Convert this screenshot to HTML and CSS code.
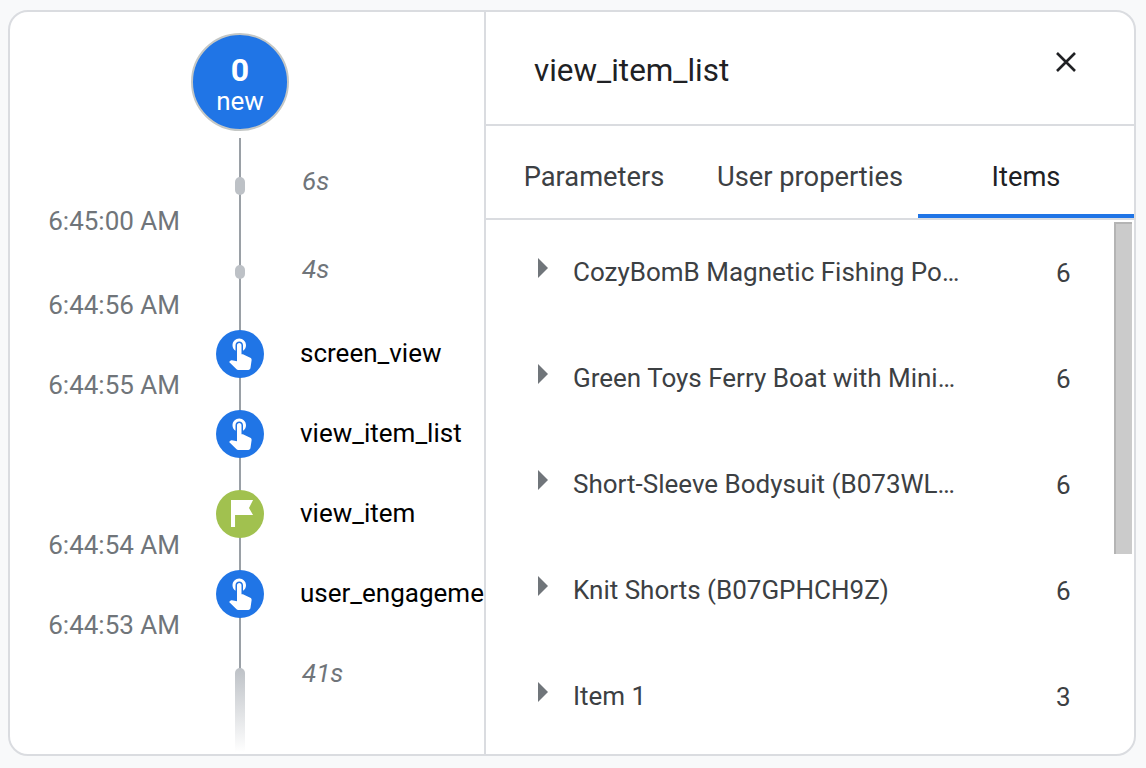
FILE: index.html
```html
<!DOCTYPE html>
<html lang="en">
<head>
<meta charset="utf-8">
<title>view_item_list</title>
<link rel="stylesheet" href="styles.css">
</head>
<body>
<svg class="defs" width="0" height="0" aria-hidden="true">
  <symbol id="touch" viewBox="0 0 24 24"><path d="M9 11.24V7.5C9 6.12 10.12 5 11.5 5S14 6.12 14 7.5v3.74c1.21-.81 2-2.18 2-3.74C16 5.01 13.99 3 11.5 3S7 5.01 7 7.5c0 1.56.79 2.93 2 3.74zm9.84 4.63l-4.54-2.26c-.17-.07-.35-.11-.54-.11H13v-6c0-.83-.67-1.5-1.5-1.5S10 6.67 10 7.5v10.74l-3.43-.72c-.08-.01-.15-.03-.24-.03-.31 0-.59.13-.79.33l-.79.8 4.94 4.94c.27.27.65.44 1.06.44h6.79c.75 0 1.33-.55 1.44-1.28l.75-5.27c.01-.07.02-.14.02-.2 0-.62-.38-1.16-.91-1.38z"/></symbol>
  <symbol id="flag" viewBox="0 0 24 24"><path d="M6 2.67H20.7L18 8l2.7 4.67H8.7v8H6z"/></symbol>
</svg>
<main class="card">
  <section class="stream">
    <div class="counter"><b class="counter-num">0</b><span class="counter-label">new</span></div>
    <div class="timeline">
      <div class="row row-tall">
        <span class="time time-40">6:45:00 AM</span>
        <span class="pill pill-lg"></span>
        <span class="gap-label">6s</span>
      </div>
      <div class="row row-tall">
        <span class="time time-36">6:44:56 AM</span>
        <span class="pill pill-sm"></span>
        <span class="gap-label">4s</span>
      </div>
      <div class="row">
        <span class="time time-32">6:44:55 AM</span>
        <span class="node node-blue"><svg class="node-icon"><use href="#touch"/></svg></span>
        <span class="event">screen_view</span>
      </div>
      <div class="row">
        <span class="time"></span>
        <span class="node node-blue"><svg class="node-icon"><use href="#touch"/></svg></span>
        <span class="event">view_item_list</span>
      </div>
      <div class="row">
        <span class="time time-32">6:44:54 AM</span>
        <span class="node node-green"><svg class="node-icon"><use href="#flag"/></svg></span>
        <span class="event">view_item</span>
      </div>
      <div class="row">
        <span class="time time-32">6:44:53 AM</span>
        <span class="node node-blue"><svg class="node-icon"><use href="#touch"/></svg></span>
        <span class="event">user_engagement</span>
      </div>
      <div class="row">
        <span class="time"></span>
        <span class="pill pill-fade"></span>
        <span class="gap-label">41s</span>
      </div>
    </div>
  </section>
  <section class="detail">
    <header class="detail-head">
      <h1 class="detail-title">view_item_list</h1>
      <svg class="close" viewBox="0 0 20 20"><path d="M1 1l18 18M19 1L1 19"/></svg>
    </header>
    <nav class="tabs">
      <span class="tab">Parameters</span>
      <span class="tab">User properties</span>
      <span class="tab tab-active">Items</span>
    </nav>
    <div class="list-wrap">
      <ul class="list">
        <li class="item"><i class="caret"></i><span class="item-name">CozyBomB Magnetic Fishing Pole and Fish Set</span><span class="item-count">6</span></li>
        <li class="item"><i class="caret"></i><span class="item-name">Green Toys Ferry Boat with Mini Cars Bathtub Toy</span><span class="item-count">6</span></li>
        <li class="item"><i class="caret"></i><span class="item-name">Short-Sleeve Bodysuit (B073WLJ9XZ)</span><span class="item-count">6</span></li>
        <li class="item"><i class="caret"></i><span class="item-name">Knit Shorts (B07GPHCH9Z)</span><span class="item-count">6</span></li>
        <li class="item"><i class="caret"></i><span class="item-name">Item 1</span><span class="item-count">3</span></li>
      </ul>
      <div class="scroll"><div class="thumb"></div></div>
    </div>
  </section>
</main>
</body>
</html>
```
FILE: styles.css
```css
* { box-sizing: border-box; }
html, body { height: 100%; }
body {
  margin: 0;
  padding: 10px 10px 12px 8px;
  background: #f8f9fa;
  font-family: Roboto, "Liberation Sans", sans-serif;
  color: #202124;
  overflow: hidden;
}
.defs { position: absolute; }
.card {
  display: flex;
  height: 746px;
  background: #fff;
  border: 2px solid #dadce0;
  border-radius: 20px;
  overflow: hidden;
}
.stream {
  width: 476px;
  flex: none;
  border-right: 2px solid #dadce0;
  overflow: hidden;
  padding-top: 21px;
}
.counter {
  width: 98px;
  height: 98px;
  margin: 0 0 6px 181px;
  padding-top: 4px;
  border: 2px solid #c4c7c5;
  border-radius: 50%;
  background: #2075e6;
  color: #fff;
  display: flex;
  flex-direction: column;
  align-items: center;
  justify-content: center;
}
.counter-num { font-size: 32px; font-weight: 700; line-height: 34px; }
.counter-label { font-size: 26px; line-height: 28px; }
.timeline { position: relative; }
.timeline::before {
  content: "";
  position: absolute;
  left: 229px;
  top: 1px;
  bottom: 43px;
  width: 2px;
  background: #9aa0a6;
}
.row {
  position: relative;
  display: grid;
  grid-template-columns: 170px 48px 1fr;
  grid-template-rows: minmax(0, 1fr);
  column-gap: 36px;
  align-items: center;
  height: 80px;
}
.row-tall { height: 88px; }
.time {
  text-align: right;
  font-size: 26px;
  color: #70757a;
  white-space: nowrap;
}
.time-40 { margin-top: 80px; }
.time-36 { margin-top: 72px; }
.time-32 { margin-top: 64px; }
.pill {
  justify-self: center;
  width: 10px;
  background: #bdc1c6;
  border-radius: 5px;
}
.pill-lg { height: 18px; margin-top: 10px; }
.pill-sm { height: 14px; margin-top: 6px; }
.pill-fade {
  height: 84px;
  margin-top: 74px;
  border-radius: 5px 5px 0 0;
  background: linear-gradient(#bdc1c6, #ffffff);
}
.gap-label { margin-left: 2px; font-size: 26px; font-style: italic; color: #70757a; }
.node {
  width: 48px;
  height: 48px;
  margin-top: 2px;
  border-radius: 50%;
  display: flex;
  align-items: center;
  justify-content: center;
}
.node-blue { background: #2075e6; }
.node-green { background: #a1c14f; }
.node-icon { width: 36px; height: 36px; fill: #fff; }
.node-blue .node-icon { margin-bottom: 5px; }
.event { font-size: 26px; color: #000; white-space: nowrap; }
.detail { flex: 1; min-width: 0; display: flex; flex-direction: column; }
.detail-head {
  flex: none;
  height: 114px;
  padding: 4px 58px 0 48px;
  border-bottom: 2px solid #dadce0;
  display: flex;
  align-items: center;
  justify-content: space-between;
}
.detail-title { margin: 0; font-size: 31.4px; font-weight: 400; }
.close {
  width: 20px;
  height: 20px;
  margin-bottom: 16px;
  fill: none;
  stroke: #202124;
  stroke-width: 2.6;
}
.tabs {
  flex: none;
  display: flex;
  height: 94px;
  border-bottom: 2px solid #dadce0;
}
.tab {
  width: 216px;
  display: flex;
  align-items: center;
  justify-content: center;
  padding-top: 10px;
  font-size: 27.3px;
  color: #3c4043;
}
.tab-active { color: #202124; border-bottom: 4px solid #2075e6; padding-top: 14px; }
.list-wrap { flex: 1; min-height: 0; display: flex; }
.list { flex: 1; margin: 0; padding: 0; list-style: none; overflow: hidden; }
.item {
  display: flex;
  align-items: center;
  height: 106px;
  padding-left: 52px;
}
.caret {
  flex: none;
  width: 0;
  height: 0;
  margin: 0 25px 10px 0;
  border-left: 10px solid #70757a;
  border-top: 10px solid transparent;
  border-bottom: 10px solid transparent;
}
.item-name {
  width: 388px;
  margin-bottom: 2px;
  font-size: 26px;
  color: #3c4043;
  white-space: nowrap;
  overflow: hidden;
  text-overflow: ellipsis;
}
.item-count { margin-left: 95px; font-size: 26px; color: #3c4043; }
.scroll { flex: none; width: 20px; padding: 2px 2px 0 0; }
.thumb {
  height: 332px;
  background: #cbcbcb;
  border-left: 2px solid #b4b4b4;
  border-top: 2px solid #b4b4b4;
}
```
